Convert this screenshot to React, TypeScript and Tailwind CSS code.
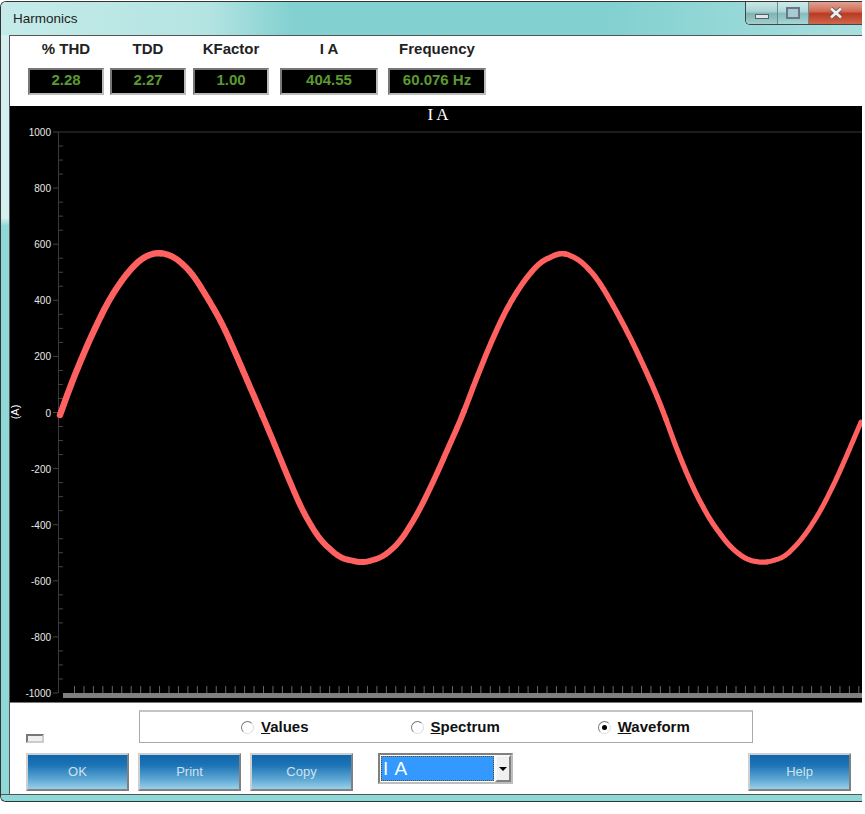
import React from 'react';

const stats = [
  { label: '% THD', value: '2.28', width: 'w-[76px]', gap: 'mr-[6px]' },
  { label: 'TDD', value: '2.27', width: 'w-[76px]', gap: 'mr-[7px]' },
  { label: 'KFactor', value: '1.00', width: 'w-[76px]', gap: 'mr-[11px]' },
  { label: 'I A', value: '404.55', width: 'w-[98px]', gap: 'mr-[10px]' },
  { label: 'Frequency', value: '60.076 Hz', width: 'w-[98px]', gap: '' },
];

const yLabels = [1000, 800, 600, 400, 200, 0, -200, -400, -600, -800, -1000];

// trace read off the screenshot, in page coords
const trace: [number, number][] = [
  [60, 415], [70, 387], [83, 355], [95, 328], [110, 298], [127, 273], [143, 257], [159, 252],
  [175, 257], [192, 273], [207, 297], [222, 323], [235, 352], [247, 380], [257, 403], [272, 438],
  [287, 475], [303, 512], [320, 540], [340, 558], [363, 563], [383, 557], [400, 542], [418, 513],
  [435, 478], [453, 437], [462, 417], [475, 382], [492, 340], [507, 308], [523, 282], [540, 262],
  [562, 252], [580, 260], [597, 278], [613, 305], [630, 337], [647, 373], [662, 408], [677, 450],
  [693, 488], [710, 520], [730, 547], [747, 560], [765, 563], [785, 557], [803, 538], [820, 512],
  [837, 478], [850, 448], [861, 422],
];

function range(n: number) {
  return Array.from({ length: n }, (_, i) => i);
}

// resample to 1px and run a moving average, the hand-read points are a bit noisy
function smoothTrace() {
  const raw: number[] = [];
  let seg = 0;
  for (let x = 60; x <= 861; x++) {
    while (trace[seg + 1][0] < x) seg++;
    const [x0, y0] = trace[seg];
    const [x1, y1] = trace[seg + 1];
    raw.push(y0 + ((y1 - y0) * (x - x0)) / (x1 - x0));
  }
  return raw.map((_, i) => {
    const w = Math.min(7, i, raw.length - 1 - i);
    let sum = 0;
    for (let k = i - w; k <= i + w; k++) sum += raw[k];
    return [i + 60 - 10, sum / (2 * w + 1) - 106];
  });
}

const smooth = smoothTrace();

// line gets slightly thinner from left to right in the reference
const chunks = range(8).map((i) => {
  const size = Math.ceil(smooth.length / 8);
  const pts = smooth.slice(i * size, (i + 1) * size + 1);
  return {
    d: 'M' + pts.map(([x, y]) => `${x},${y.toFixed(1)}`).join(' L'),
    width: 6.4 - i * 0.2,
  };
});

function Chart() {
  const top = 26;
  const bottom = 587;
  const step = (bottom - top) / 40;
  return (
    <div className="h-[597px] bg-black border-b border-[#777] shrink-0">
      <svg width="852" height="597" className="block">
        <text x="428" y="14" fill="#fff" fontSize="17" textAnchor="middle" fontFamily="'Liberation Serif', serif">I A</text>
        <line x1="48" y1={top} x2="852" y2={top} stroke="#3a3a3a" />
        <line x1="48.5" y1={top} x2="48.5" y2={bottom} stroke="#3a3a3a" />
        {range(41).map((i) => (
          <line
            key={i}
            x1={i % 4 === 0 ? 43 : 48}
            x2={i % 4 === 0 ? 48 : 53}
            y1={top + i * step}
            y2={top + i * step}
            stroke="#444"
          />
        ))}
        {yLabels.map((v, i) => (
          <text
            key={v}
            x="41"
            y={top + i * 4 * step + 4}
            fill="#e8e8e8"
            fontSize="10"
            textAnchor="end"
            fontFamily="'Liberation Sans', sans-serif"
          >
            {v}
          </text>
        ))}
        <text
          transform="translate(9 306) rotate(-90)"
          fill="#fff"
          fontSize="11"
          textAnchor="middle"
          fontFamily="'Liberation Sans', sans-serif"
        >
          (A)
        </text>
        {range(85).map((i) => (
          <line key={i} x1={64.5 + i * 9.45} x2={64.5 + i * 9.45} y1="580" y2="587" stroke="#666" />
        ))}
        <rect x="53" y="587" width="799" height="5" fill="#808080" />
        {chunks.map((c) => (
          <path key={c.d} d={c.d} fill="none" stroke="#ff6060" strokeWidth={c.width} strokeLinecap="round" strokeLinejoin="round" />
        ))}
      </svg>
    </div>
  );
}

function Radio({ hot, rest, on, className }: { hot: string; rest: string; on?: boolean; className: string }) {
  return (
    <div className={`flex items-center ${className}`}>
      <span className="w-[13px] h-[13px] rounded-full border border-t-[#777] border-l-[#777] border-r-[#ddd] border-b-[#ddd] bg-white flex items-center justify-center mr-[7px]">
        {on && <span className="w-[5px] h-[5px] rounded-full bg-black" />}
      </span>
      <span className="text-[15px] font-bold text-[#111]">
        <span className="underline">{hot}</span>
        {rest}
      </span>
    </div>
  );
}

function BlueButton({ label, className = '' }: { label: string; className?: string }) {
  return (
    <button className={`w-[103px] h-[38px] flex items-center justify-center text-[13px] font-light text-[#cfe2f0] bg-[linear-gradient(to_bottom,#0f66ac_0%,#1c74b6_30%,#5aa5d2_70%,#9ad0e8_100%)] border-2 border-t-[#cfcfcf] border-l-[#cfcfcf] border-r-[#808080] border-b-[#808080] ${className}`}>
      {label}
    </button>
  );
}

export default function App() {
  return (
    <div className="w-[865px] h-[814px] bg-white font-['Liberation_Sans',sans-serif] overflow-hidden">
      <div className="w-[862px] h-[801px] mt-[1px] flex flex-col rounded-tl-[6px] rounded-bl-[6px] border-l border-t border-b border-[#333] bg-[linear-gradient(to_bottom,#d4efef_0%,#d4efef_27%,#8fd8d8_28%,#8fd8d8_100%)] overflow-hidden">
        <div className="h-[33px] shrink-0 flex items-start justify-between bg-[linear-gradient(to_right,#c4ebe9_0%,#b4e4e2_24%,#82d0d0_34%,#82d0d0_70%,#a8e0df_100%)]">
          <span className="ml-[12px] mt-[9px] text-[13.5px] leading-[15px] text-[#222]">Harmonics</span>
          <div className="flex h-[24px] -mt-[1px] border-l border-b border-[#444] rounded-bl-[5px] overflow-hidden">
            <div className="w-[32px] flex items-center justify-center border-r border-[#5f8f8f] bg-[linear-gradient(to_bottom,#cde9e8_0%,#a9d3d2_45%,#7fb3b3_55%,#a2cfcf_100%)]">
              <span className="w-[14px] h-[5px] mt-[8px] bg-[#dfe6ea] border border-[#55606a]" />
            </div>
            <div className="w-[31px] flex items-center justify-center border-r border-[#5f8f8f] bg-[linear-gradient(to_bottom,#d0ecec_0%,#b0dadb_45%,#86bbbc_55%,#a8d6d6_100%)]">
              <span className="w-[14px] h-[12px] border-2 border-[#6a7680] bg-[#a7cbd2]" />
            </div>
            <div className="w-[53px] flex items-center justify-center bg-[linear-gradient(to_bottom,#e0a89a_0%,#d26a55_45%,#b83a22_55%,#d0674c_100%)]">
              <svg width="14" height="12" viewBox="0 0 14 12">
                <path d="M2 1.5 L12 10.5 M12 1.5 L2 10.5" stroke="#5b5b5b" strokeWidth="4.2" />
                <path d="M2 1.5 L12 10.5 M12 1.5 L2 10.5" stroke="#f0f0f0" strokeWidth="2.6" />
              </svg>
            </div>
          </div>
        </div>

        <div className="ml-[8px] flex-1 flex flex-col bg-white border-l border-t border-[#555]">
          <div className="h-[70px] shrink-0 flex pl-[18px]">
            {stats.map((s) => (
              <div key={s.label} className={`flex flex-col items-center ${s.width} ${s.gap}`}>
                <span className="mt-[5px] h-[16px] leading-[16px] text-[15px] font-bold whitespace-nowrap text-[#222]">{s.label}</span>
                <span className="mt-[11px] w-full h-[27px] pb-[3px] flex items-center justify-center bg-black border-2 border-t-[#777] border-l-[#777] border-r-[#bbb] border-b-[#bbb] text-[15px] font-bold whitespace-nowrap text-[#5c9a30]">
                  {s.value}
                </span>
              </div>
            ))}
          </div>

          <Chart />

          <div className="flex items-end pl-[16px] pt-[7px]">
            <span className="w-[18px] h-[9px] mr-[95px] bg-[#efefef] border-2 border-t-[#777] border-l-[#777] border-r-[#ccc] border-b-[#ccc]" />
            <div className="w-[614px] h-[33px] flex items-center border border-[#aaa] border-t-2 border-t-[#c4c4c4] bg-white">
              <Radio hot="V" rest="alues" className="ml-[101px]" />
              <Radio hot="S" rest="pectrum" className="ml-[102px]" />
              <Radio hot="W" rest="aveform" on className="ml-[98px]" />
            </div>
          </div>

          <div className="flex items-start pl-[16px] pt-[10px]">
            <BlueButton label="OK" />
            <BlueButton label="Print" className="ml-[9px]" />
            <BlueButton label="Copy" className="ml-[9px]" />
            <div className="ml-[25px] w-[135px] h-[31px] flex border-2 border-t-[#808080] border-l-[#808080] border-r-[#bdbdbd] border-b-[#bdbdbd] bg-white">
              <div className="w-[113px] m-[1px] border border-dotted border-[#664a1f] bg-[#3399ff] text-white text-[19px] leading-[24px] pl-[1px] tracking-[1px]">I A</div>
              <div className="flex-1 flex items-center justify-center bg-[#f0f0f0] border-2 border-t-[#f8f8f8] border-l-[#f8f8f8] border-r-[#808080] border-b-[#808080]">
                <span className="w-0 h-0 border-l-[4px] border-r-[4px] border-t-[4px] border-l-transparent border-r-transparent border-t-black" />
              </div>
            </div>
            <BlueButton label="Help" className="ml-[235px]" />
          </div>
        </div>
        <div className="h-[7px] shrink-0 border-t border-[#555] bg-[#8fd8d8] -mt-[1px]" />
      </div>
    </div>
  );
}
